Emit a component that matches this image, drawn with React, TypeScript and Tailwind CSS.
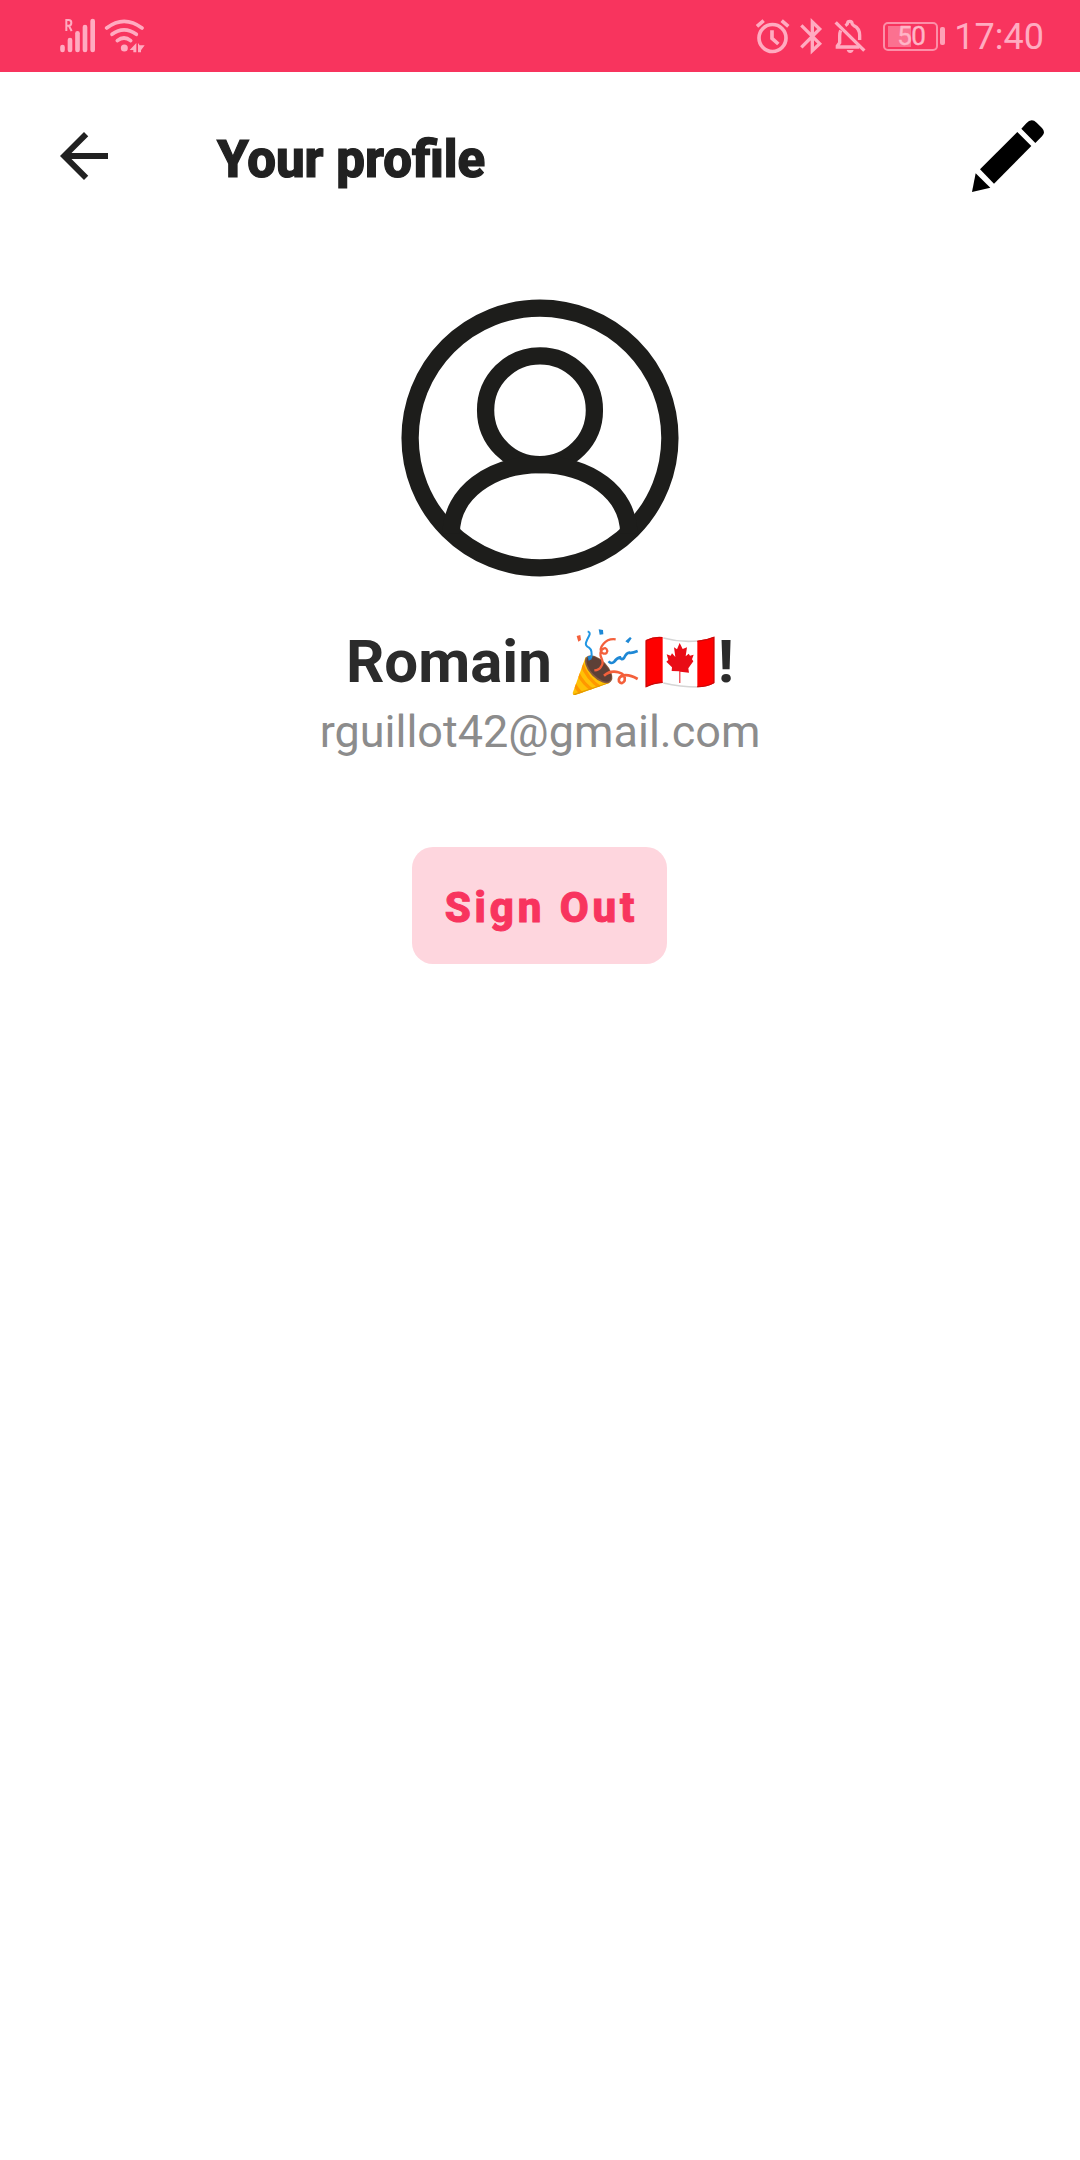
import React from "react";

const Signal = () => (
  <svg className="ml-[59px] h-10 w-[38px]" viewBox="57 48 114 120" fill="none" stroke="#ffabc0" strokeLinecap="round">
    <g strokeWidth="14">
      <path d="M67.500 141V150" />
      <path d="M90 120V150" />
      <path d="M112.500 100V150" />
      <path d="M135 81V150" />
      <path d="M158 63V150" />
    </g>
    <path d="M79 93V60H86Q94 60 94 68Q94 77 86 77H79M87 78L95 93" strokeWidth="6" strokeLinecap="butt" />
  </svg>
);

const Wifi = () => (
  <svg className="ml-[7px] h-10 w-[42px]" viewBox="192 48 126 120" fill="none" stroke="#ffabc0" strokeWidth="11" strokeLinecap="round">
    <path d="M200 84Q252 44 306 84" />
    <path d="M216 103Q252 76 289 103" />
    <path d="M232 122Q252 106 272 122" />
    <circle cx="253" cy="144" r="10.500" fill="#ffabc0" stroke="none" />
    <path d="M289 129V157H280V150H269ZM294 129L299 136H314L303 151V157H294Z" fill="#ffabc0" stroke="none" />
  </svg>
);

const Alarm = () => (
  <svg className="h-10 w-9" viewBox="48 48 108 120" fill="none" stroke="#ffabc0" strokeWidth="11">
    <circle cx="100.500" cy="114" r="40.500" />
    <path d="M99 91V115L118 132" />
    <path d="M54 79L74 62M128 62L148 79" />
  </svg>
);

const Bluetooth = () => (
  <svg className="ml-[8px] h-10 w-6" viewBox="180 48 72 120" fill="none" stroke="#ffabc0" strokeWidth="10">
    <path d="M187 76L242 131L220 152V66L242 87L187 142" />
  </svg>
);

const BellOff = () => (
  <svg className="ml-[11px] h-10 w-8" viewBox="286 48 96 120" fill="none" stroke="#ffabc0" strokeWidth="10">
    <path d="M291 67L377 152" />
    <path d="M306 91Q303 98 303 108V128L296 138V141H362M320 77Q327 73 327 69Q327 64 333.500 64Q340 64 340 70Q340 74 346 77Q363 85 363 106V120" />
    <path d="M324 150H345Q342 159 334.500 159Q327 159 324 150Z" fill="#ffabc0" stroke="none" />
  </svg>
);

const Battery = () => (
  <div className="ml-[17px] flex h-10 items-center">
    <div className="relative flex h-[29px] w-[55px] items-center justify-center rounded-[5px] border-2 border-[#fc8fa8]">
      <div className="absolute top-[2px] left-[3px] h-[21px] w-[23px] bg-[#fb7190]" />
      <span className="relative pl-px text-[26px] leading-none tracking-[-0.5px] text-[#ffb5c7] [-webkit-text-stroke:0.4px_#ffb5c7]">50</span>
    </div>
    <div className="ml-[2px] h-[18px] w-[5px] rounded-[2px] bg-[#fea0b6]" />
  </div>
);

const Pencil = () => (
  <svg className="h-[72px] w-[72px]" viewBox="66 60 216 216">
    <path d="M202 96L244 138L132 251L90 208Z" />
    <path d="M214 86L229 70Q244 53 260 68L276 84Q288 97 276 109L256 129Z" />
    <path d="M77 220L121 263L66 276Z" />
  </svg>
);

const Avatar = () => (
  <svg className="mt-[74px] h-[280px] w-[280px]" viewBox="10 7.700 280 280" fill="none" stroke="#1d1d1b" strokeWidth="17.300">
    <circle cx="150" cy="147.700" r="129.900" />
    <circle cx="150" cy="119.900" r="54.400" />
    <path d="M61.300 243C61.300 203 101 174.300 150 174.300S238.700 203 238.700 243" />
  </svg>
);

const Party = () => (
  <svg className="h-[70px] w-[68px]" viewBox="34 20 204 210" fill="none">
    <defs>
      <clipPath id="cone"><path d="M75 109L36 218Q36 225 44 224L148 187Q115 180 75 109Z" /></clipPath>
    </defs>
    <path d="M75 109L36 218Q36 225 44 224L148 187Q115 180 75 109Z" fill="#ffc107" />
    <g clipPath="url(#cone)" stroke="#ff9800" strokeWidth="10">
      <path d="M62 127Q77 174 122 204" />
      <path d="M51 157Q66 190 98 211" />
      <path d="M40 188Q48 207 66 222" />
      <path d="M37 224L148 187" stroke="#e49c00" strokeWidth="5" />
    </g>
    <ellipse cx="114" cy="147" rx="52" ry="27" transform="rotate(46 114 147)" fill="#8a5a3c" />
    <ellipse cx="115" cy="146" rx="48" ry="23" transform="rotate(46 115 146)" fill="#5d4037" />
    <path d="M81 108L90 107L93 117L84 121Z" fill="#1687da" />
    <path d="M81 33Q91 36 85 47T76 67Q73 76 85 82Q97 91 91 114" stroke="#2196e3" strokeWidth="6" />
    <path d="M144 123Q150 132 160 125Q169 112 178 111Q182 121 190 113Q198 96 207 97Q213 99 231 92" stroke="#1e88d5" strokeWidth="8" />
    <path d="M165 57Q142 54 128 71Q115 86 124 97Q137 105 140 92Q136 76 123 89Q116 99 122 112Q130 129 121 139Q116 149 101 150" stroke="#f4603b" strokeWidth="7" />
    <path d="M130 166Q150 149 173 156Q196 162 192 181Q184 195 175 183Q172 169 189 165Q207 162 231 176" stroke="#f4603b" strokeWidth="8" />
    <path d="M114 27L127 29L128 42L117 43Z" fill="#1e88d5" />
    <path d="M194 63L208 50L213 54L203 69Z" fill="#1e88d5" />
    <path d="M48 47L59 44L61 59L53 64Z" fill="#f4603b" />
  </svg>
);

const Flag = () => (
  <svg className="ml-[5px] h-[52px] w-[70px]" viewBox="254 46 210 156">
    <path d="M256 58Q282 44 310 50Q360 66 411 60Q440 57 462 48V187Q438 202 411 199Q365 199 310 187Q282 186 256 201Z" fill="#fff" />
    <path d="M309 52Q360 66 412 61M309 187Q360 199 412 199" stroke="#d5d5d5" strokeWidth="5" fill="none" />
    <path d="M256 58Q282 46 307 49V186Q280 187 256 200ZM411 60Q440 57 462 48V187Q438 200 411 200Z" fill="#fe0000" />
    <path d="M257.500 60V198Q281 186 307 185M305 51Q281 48 257 60M411 198Q440 198 460.500 186V50Q438 60 411 62" stroke="#c80909" strokeWidth="3.500" fill="none" />
    <path d="M358 67L367 85L380 80L376 107L385 99L389 105L400 102L395 116L399 122L384 143L386 156L360 153V187H357V152L334 151L335 140L318 123L324 118L319 101L331 105L335 98L345 109L341 80L350 86Z" fill="#e90c16" />
  </svg>
);

export default function App() {
  return (
    <div className="flex h-[2160px] w-[1080px] flex-col bg-white font-['Roboto',sans-serif]">
      <header className="flex h-[72px] items-center bg-[#f8345e] text-[#ffabc0]">
        <Signal />
        <Wifi />
        <div className="ml-auto flex items-center pr-[36px]">
          <Alarm />
          <Bluetooth />
          <BellOff />
          <Battery />
          <span className="ml-[9px] pt-0.5 text-[36px] leading-10">17:40</span>
        </div>
      </header>

      <nav className="flex h-[152px] items-start pt-12 pr-9 pl-12">
        <button aria-label="Back">
          <svg className="h-[72px] w-[72px]" viewBox="0 0 24 24" fill="#212121">
            <path d="M20 11H7.830l5.590-5.590L12 4l-8 8 8 8 1.410-1.410L7.830 13H20v-2z" />
          </svg>
        </button>
        <h1 className="ml-24 pl-px text-[51px] leading-[79px] font-extrabold text-[#212121] [-webkit-text-stroke:1.2px_#212121]">Your profile</h1>
        <button aria-label="Edit profile" className="ml-auto">
          <Pencil />
        </button>
      </nav>

      <main className="flex flex-col items-center">
        <Avatar />
        <div className="mt-12 flex h-[72px] items-center text-[60px] leading-[72px] font-bold text-[#2b2b2b]">
          <span>Romain</span>
          <span className="ml-[20px] flex items-center">
            <Party />
            <Flag />
          </span>
          <span className="ml-[3px]">!</span>
        </div>
        <p className="mt-1 text-[45px] leading-[60px] text-[#8c8c8c]">rguillot42@gmail.com</p>
        <button className="mt-[85px] mr-px h-[117px] w-[255px] rounded-[21px] bg-[#fed6de] pt-[3px] pl-1 text-[42px] font-extrabold tracking-[3.900px] whitespace-nowrap text-[#f8345e] [-webkit-text-stroke:1px_#f8345e]">
          Sign Out
        </button>
      </main>
    </div>
  );
}
